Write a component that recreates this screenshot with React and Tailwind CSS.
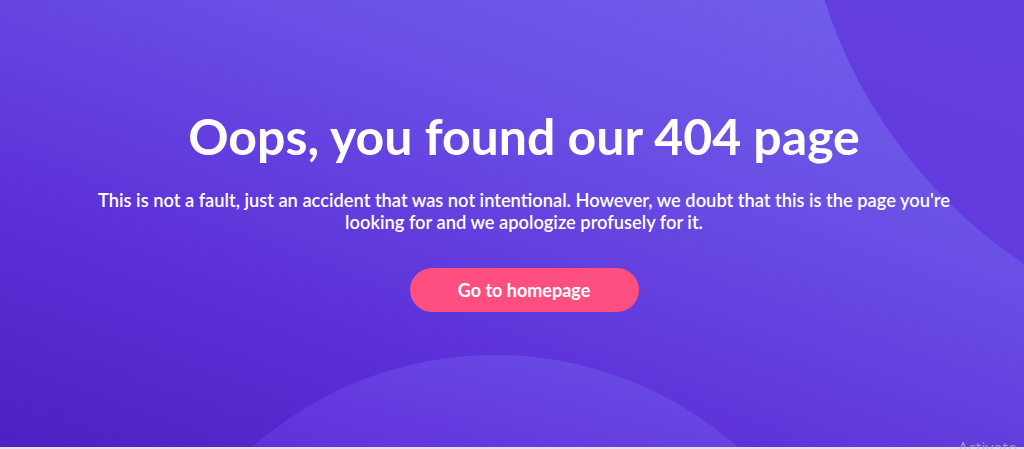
export default function App() {
  return (
    <div className="relative w-full h-[449px] overflow-hidden bg-[#e4e1ee] font-['Lato',sans-serif]">
      {/* Hero 404 */}
      <section className="relative h-[447px] overflow-hidden bg-[linear-gradient(200deg,#7262eb_0%,#6a4ee5_35%,#5c30d8_70%,#4d20c2_100%)]">
        {/* decorative circles */}
        <div className="absolute left-[801px] top-[-648px] w-[994px] h-[994px] rounded-full bg-[linear-gradient(200deg,#6848e4,#6340e0_60%,#6238de)]" />
        <div className="absolute left-[129px] top-[355px] w-[732px] h-[732px] rounded-full bg-[linear-gradient(195deg,#6c56e8_0%,#6336de_22%,#5526cc_42%)]" />

        <div className="relative flex flex-col items-center pt-[106px] pl-6 text-white text-center">
          <h1 className="text-[50px] leading-[60px] font-bold">
            Oops, you found our 404 page
          </h1>
          <p className="mt-[23px] max-w-[880px] text-[18.3px] leading-[22px] font-semibold">
            This is not a fault, just an accident that was not intentional. However, we doubt that this is the page you're looking for and we apologize profusely for it.
          </p>
          <a
            href="#"
            className="mt-[35px] w-[229px] h-[44px] flex items-center justify-center rounded-full bg-[#ff4f80] text-[18px] font-bold text-white"
          >
            Go to homepage
          </a>
        </div>
      </section>

      {/* watermark */}
      <span className="absolute left-[958px] top-[436px] text-[16px] text-[#b8b4c8]/80 font-['Open_Sans',sans-serif]">
        Activate
      </span>
    </div>
  );
}
